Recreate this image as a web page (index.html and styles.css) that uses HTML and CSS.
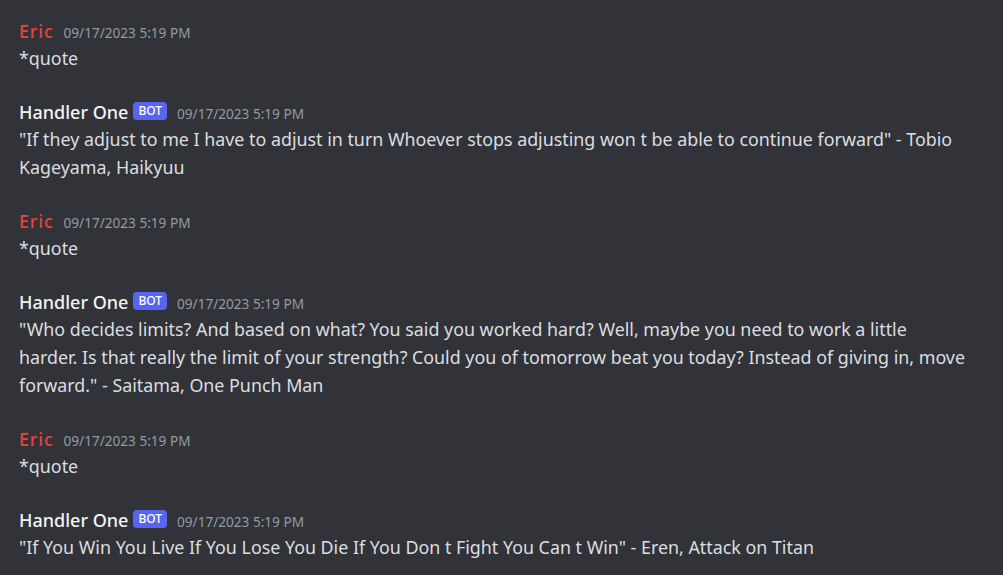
FILE: index.html
```html
<!DOCTYPE html>
<html>
<head>
<meta charset="utf-8">
<link rel="stylesheet" href="styles.css">
</head>
<body>
<div class="chat">
  <div class="msg">
    <div class="head"><span class="name red">Eric</span><span class="time">09/17/2023 5:19 PM</span></div>
    <div class="body">*quote</div>
  </div>
  <div class="msg">
    <div class="head"><span class="name">Handler One</span><span class="bot">BOT</span><span class="time">09/17/2023 5:19 PM</span></div>
    <div class="body">"If they adjust to me I have to adjust in turn Whoever stops adjusting won t be able to continue forward" - Tobio Kageyama, Haikyuu</div>
  </div>
  <div class="msg">
    <div class="head"><span class="name red">Eric</span><span class="time">09/17/2023 5:19 PM</span></div>
    <div class="body">*quote</div>
  </div>
  <div class="msg">
    <div class="head"><span class="name">Handler One</span><span class="bot">BOT</span><span class="time">09/17/2023 5:19 PM</span></div>
    <div class="body">"Who decides limits? And based on what? You said you worked hard? Well, maybe you need to work a little harder. Is that really the limit of your strength? Could you of tomorrow beat you today? Instead of giving in, move forward." - Saitama, One Punch Man</div>
  </div>
  <div class="msg">
    <div class="head"><span class="name red">Eric</span><span class="time">09/17/2023 5:19 PM</span></div>
    <div class="body">*quote</div>
  </div>
  <div class="msg">
    <div class="head"><span class="name">Handler One</span><span class="bot">BOT</span><span class="time">09/17/2023 5:19 PM</span></div>
    <div class="body">"If You Win You Live If You Lose You Die If You Don t Fight You Can t Win" - Eren, Attack on Titan</div>
  </div>
</div>
</body>
</html>
```
FILE: styles.css
```css
html, body {
  margin: 0;
  padding: 0;
  background: #313338;
  height: 100%;
}
body {
  font-family: "Noto Sans", "Open Sans", sans-serif;
  color: #dbdee1;
}
.chat {
  display: flex;
  flex-direction: column;
  gap: 27px;
  padding: 18px 34px 0 19px;
  width: 950px;
}
.head {
  display: flex;
  align-items: center;
  height: 26px;
}
.name {
  font-size: 18px;
  font-weight: 500;
  color: #f2f3f5;
}
.name.red {
  color: #e8423b;
  letter-spacing: 0.8px;
}
.bot {
  background: #5865f2;
  color: #fff;
  font-size: 12px;
  font-weight: 500;
  height: 18px;
  line-height: 18px;
  padding: 0 5px;
  border-radius: 4px;
  margin-left: 5px;
  margin-top: -3px;
}
.time {
  font-size: 13.6px;
  color: #949ba4;
  margin-left: 10px;
  margin-top: 2px;
}
.body {
  font-size: 17.85px;
  line-height: 28px;
}
```
